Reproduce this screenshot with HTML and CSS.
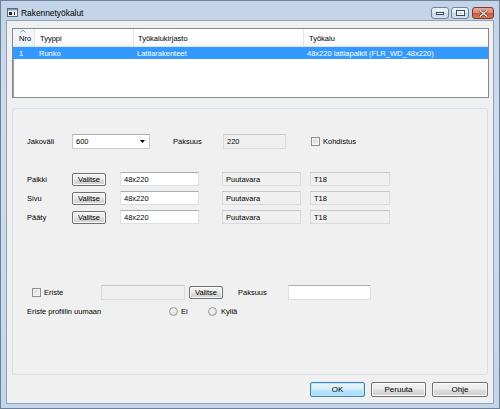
FILE: index.html
```html
<!DOCTYPE html>
<html>
<head>
  <meta charset="utf-8">
  <link rel="stylesheet" href="styles.css">
</head>
<body>
  <div class="window">
    <div class="titlebar">
      <svg class="app-icon" width="11" height="9" viewBox="0 0 11 9">
        <rect x="0.5" y="0.5" width="10" height="8" fill="#eef3f8" stroke="#5d6b7c"/>
        <rect x="1" y="1" width="9" height="1.5" fill="#7d9dc4"/>
        <rect x="2" y="4" width="3" height="3" fill="#1d2430"/>
        <rect x="7" y="4" width="1" height="3" fill="#1d2430"/>
      </svg>
      <span class="title">Rakennetyökalut</span>
      <div class="caption-buttons">
        <div class="cap-btn">
          <svg width="8" height="3" viewBox="0 0 8 3"><rect x="0.5" y="0.5" width="7" height="2" fill="#fff" stroke="#3b4a5e"/></svg>
        </div>
        <div class="cap-btn">
          <svg width="9" height="6" viewBox="0 0 9 6"><rect x="0.5" y="0.5" width="8" height="5" fill="none" stroke="#3b4a5e"/><rect x="1.5" y="1.5" width="6" height="3" fill="none" stroke="#fff"/></svg>
        </div>
        <div class="cap-btn close">
          <svg width="9" height="7" viewBox="0 0 9 7"><path d="M1 0.5 L8 6.5 M8 0.5 L1 6.5" stroke="#5a2418" stroke-width="2.4"/><path d="M1 0.5 L8 6.5 M8 0.5 L1 6.5" stroke="#fff" stroke-width="1.2"/></svg>
        </div>
      </div>
    </div>

    <div class="client">
      <div class="listview">
        <div class="lv-header">
          <div class="lv-col col-nro sorted">
            <svg class="sort-arrow" width="6" height="4" viewBox="0 0 6 4"><polyline points="0.5,3.5 3,1 5.5,3.5" fill="none" stroke="#8b97a6"/></svg>
            Nro
          </div>
          <div class="lv-col col-type">Tyyppi</div>
          <div class="lv-col col-lib">Työkalukirjasto</div>
          <div class="lv-col col-tool">Työkalu</div>
        </div>
        <div class="lv-row selected">
          <div class="lv-cell col-nro">1</div>
          <div class="lv-cell col-type">Runko</div>
          <div class="lv-cell col-lib">Lattiarakenteet</div>
          <div class="lv-cell col-tool">48x220 lattiapalkit (FLR_WD_48x220)</div>
        </div>
      </div>

      <div class="group">
        <div class="form-row first-row">
          <span class="label">Jakoväli</span>
          <div class="combo">
            <span>600</span>
            <svg width="5" height="3" viewBox="0 0 5 3"><polygon points="0,0 5,0 2.5,3" fill="#000"/></svg>
          </div>
          <span class="label paksuus-label">Paksuus</span>
          <div class="textbox readonly thickness">220</div>
          <span class="checkbox kohdistus"></span>
          <span class="check-label">Kohdistus</span>
        </div>

        <div class="part-rows">
          <div class="form-row">
            <span class="label">Palkki</span>
            <button class="btn small">Valitse</button>
            <div class="textbox profile">48x220</div>
            <div class="textbox readonly material">Puutavara</div>
            <div class="textbox readonly grade">T18</div>
          </div>
          <div class="form-row">
            <span class="label">Sivu</span>
            <button class="btn small">Valitse</button>
            <div class="textbox profile">48x220</div>
            <div class="textbox readonly material">Puutavara</div>
            <div class="textbox readonly grade">T18</div>
          </div>
          <div class="form-row">
            <span class="label">Pääty</span>
            <button class="btn small">Valitse</button>
            <div class="textbox profile">48x220</div>
            <div class="textbox readonly material">Puutavara</div>
            <div class="textbox readonly grade">T18</div>
          </div>
        </div>

        <div class="form-row insulation-row">
          <div class="check-group">
            <span class="checkbox"></span>
            <span class="check-label">Eriste</span>
          </div>
          <div class="textbox readonly insulation"></div>
          <button class="btn small insulation-btn">Valitse</button>
          <span class="label insulation-paksuus">Paksuus</span>
          <div class="textbox insulation-thickness"></div>
        </div>

        <div class="form-row radio-row">
          <span class="label radio-caption">Eriste profiilin uumaan</span>
          <div class="radio-group">
            <span class="radio"></span>
            <span class="radio-label">Ei</span>
          </div>
          <div class="radio-group">
            <span class="radio"></span>
            <span class="radio-label">Kyllä</span>
          </div>
        </div>
      </div>

      <div class="dialog-buttons">
        <button class="btn dialog default">OK</button>
        <button class="btn dialog">Peruuta</button>
        <button class="btn dialog wide">Ohje</button>
      </div>
    </div>
  </div>
</body>
</html>
```

FILE: styles.css
```css
body {
  margin: 0;
  font-family: "Liberation Sans", Arial, sans-serif;
  font-size: 7.5px;
  color: #000;
}

.window {
  width: 500px;
  height: 409px;
  box-sizing: border-box;
  border: 1px solid #6e8199;
  background: linear-gradient(180deg, #c3d4e8 0%, #cfdcec 30%, #c5d6ea 100%);
  display: flex;
  flex-direction: column;
}

/* title bar */

.titlebar {
  height: 19px;
  display: flex;
  align-items: flex-start;
  padding-left: 6px;
}

.app-icon {
  margin-top: 7px;
  display: block;
}

.title {
  font-size: 8.4px;
  margin-left: 3px;
  margin-top: 7px;
  color: #000;
}

.caption-buttons {
  margin-left: auto;
  margin-right: 5px;
  margin-top: 6px;
  display: flex;
  gap: 2px;
}

.cap-btn {
  width: 18px;
  height: 12px;
  box-sizing: border-box;
  border: 1px solid #71829a;
  border-radius: 3px;
  background: linear-gradient(180deg, #f2f6fb 0%, #dde7f2 45%, #c7d5e6 50%, #d6e2ef 100%);
  display: flex;
  align-items: center;
  justify-content: center;
}

.cap-btn.close {
  width: 22px;
  margin-left: 1px;
  border-color: #7b3b2c;
  background: linear-gradient(180deg, #e8aa98 0%, #d98a72 45%, #c75a3e 50%, #d9785a 100%);
}

.cap-btn svg {
  display: block;
}

/* client area */

.client {
  flex: 1;
  margin: 0 5px 4px 5px;
  border: 1px solid #8fa2bb;
  background: #f0f0f0;
  display: flex;
  flex-direction: column;
}

.listview {
  margin: 7px 0 0 5px;
  width: 477px;
  height: 70px;
  box-sizing: border-box;
  border: 1px solid #828790;
  box-shadow: inset 1px 1px 0 #a0a0a0;
  background: #fff;
}

.lv-header {
  display: flex;
  height: 17px;
  border-bottom: 1px solid #e2e4e8;
  background: linear-gradient(180deg, #ffffff 0%, #ffffff 50%, #f5f6f8 100%);
}

.lv-col {
  box-sizing: border-box;
  display: flex;
  align-items: center;
  padding-top: 2px;
  padding-left: 5px;
  border-right: 1px solid #e3e5e8;
  position: relative;
}

.lv-col.sorted {
  background: linear-gradient(180deg, #f3f8fc 0%, #eaf2f9 100%);
}

.sort-arrow {
  position: absolute;
  left: 7px;
  top: 0;
}

.col-nro {
  width: 22px;
  padding-left: 6px;
}

.col-type {
  width: 99px;
}

.col-lib {
  width: 170px;
  padding-left: 4px;
}

.col-tool {
  flex: 1;
  border-right: none;
}

.lv-row {
  display: flex;
  height: 12px;
}

.lv-row.selected {
  background: #3399ff;
  color: #fff;
}

.lv-cell {
  box-sizing: border-box;
  display: flex;
  align-items: center;
  padding-left: 4px;
  white-space: nowrap;
}

.lv-cell.col-nro {
  padding-left: 6px;
}

.lv-cell.col-lib {
  padding-left: 3px;
}

.lv-cell.col-tool {
  padding-left: 3px;
}

/* group box */

.group {
  margin: 10px 0 0 5px;
  width: 476px;
  height: 267px;
  box-sizing: border-box;
  border: 1px solid #d5dfe5;
  border-radius: 3px;
  padding: 25px 0 0 14px;
}

.form-row {
  display: flex;
  align-items: center;
  height: 14px;
}

.first-row {
  height: 15px;
}

.label {
  width: 45px;
  flex: none;
}

.combo {
  width: 78px;
  height: 15px;
  box-sizing: border-box;
  border: 1px solid #c5c9d0;
  border-top-color: #abadb3;
  background: #fff;
  display: flex;
  align-items: center;
  justify-content: space-between;
  padding: 0 4px 0 3px;
}

.paksuus-label {
  margin-left: 23px;
  width: 50px;
}

.textbox {
  height: 14px;
  box-sizing: border-box;
  border: 1px solid #dbdfe6;
  border-top-color: #abadb3;
  background: #fff;
  display: flex;
  align-items: center;
  padding-left: 3px;
  flex: none;
}

.textbox.readonly {
  background: #f0f0f0;
  border-color: #dadada;
  border-top-color: #c8c8c8;
}

.thickness {
  width: 63px;
  height: 15px;
}

.checkbox {
  width: 9px;
  height: 9px;
  box-sizing: border-box;
  border: 1px solid #8e8f8f;
  background: linear-gradient(135deg, #d8d8d8 0%, #f4f4f4 100%);
  box-shadow: inset 0 0 0 1px #f4f4f4;
  flex: none;
}

.kohdistus {
  margin-left: 25px;
}

.check-label {
  margin-left: 3px;
}

.part-rows {
  margin-top: 23px;
  display: flex;
  flex-direction: column;
  gap: 5px;
}

.btn {
  font-family: "Liberation Sans", Arial, sans-serif;
  font-size: 7.5px;
  color: #000;
  box-sizing: border-box;
  border: 1px solid #707070;
  border-radius: 2px;
  background: linear-gradient(180deg, #f2f2f2 0%, #ebebeb 48%, #dddddd 52%, #cfcfcf 100%);
  box-shadow: inset 0 0 0 1px #fcfcfc;
  padding: 0;
  margin: 0;
  flex: none;
}

.btn.small {
  width: 34px;
  height: 13px;
}

.profile {
  width: 79px;
  margin-left: 14px;
}

.material {
  width: 79px;
  margin-left: 23px;
}

.grade {
  width: 80px;
  margin-left: 9px;
}

.insulation-row {
  margin-top: 61px;
  height: 15px;
}

.check-group {
  width: 74px;
  padding-left: 5px;
  box-sizing: border-box;
  display: flex;
  align-items: center;
  flex: none;
}

.insulation {
  width: 84px;
  height: 15px;
  border-color: #e2e2e2;
}

.insulation-btn {
  margin-left: 4px;
  width: 33px;
}

.insulation-paksuus {
  margin-left: 15px;
  width: 50px;
}

.insulation-thickness {
  width: 83px;
  height: 15px;
}

.radio-row {
  margin-top: 5px;
  height: 12px;
}

.radio-caption {
  width: 142px;
}

.radio-group {
  width: 39px;
  display: flex;
  align-items: center;
  flex: none;
}

.radio {
  width: 9px;
  height: 9px;
  box-sizing: border-box;
  border-radius: 50%;
  border: 1px solid #9a9a9a;
  background: radial-gradient(circle at 40% 40%, #f6f6f6 0%, #d4d4d4 100%);
  flex: none;
}

.radio-label {
  margin-left: 3px;
}

.radio-group + .radio-group .radio-label {
  margin-left: 4px;
}

/* dialog buttons */

.dialog-buttons {
  display: flex;
  justify-content: flex-end;
  gap: 6px;
  margin: 7px 5px 0 0;
}

.btn.dialog {
  width: 55px;
  height: 15px;
  font-size: 8px;
}

.btn.dialog.wide {
  width: 56px;
}

.btn.default {
  border-color: #3c7fb1;
  box-shadow: inset 0 0 0 1px #bfe6f8;
  background: linear-gradient(180deg, #eaf6fd 0%, #d9f0fc 48%, #bee6fd 52%, #a7d9f5 100%);
}
```
